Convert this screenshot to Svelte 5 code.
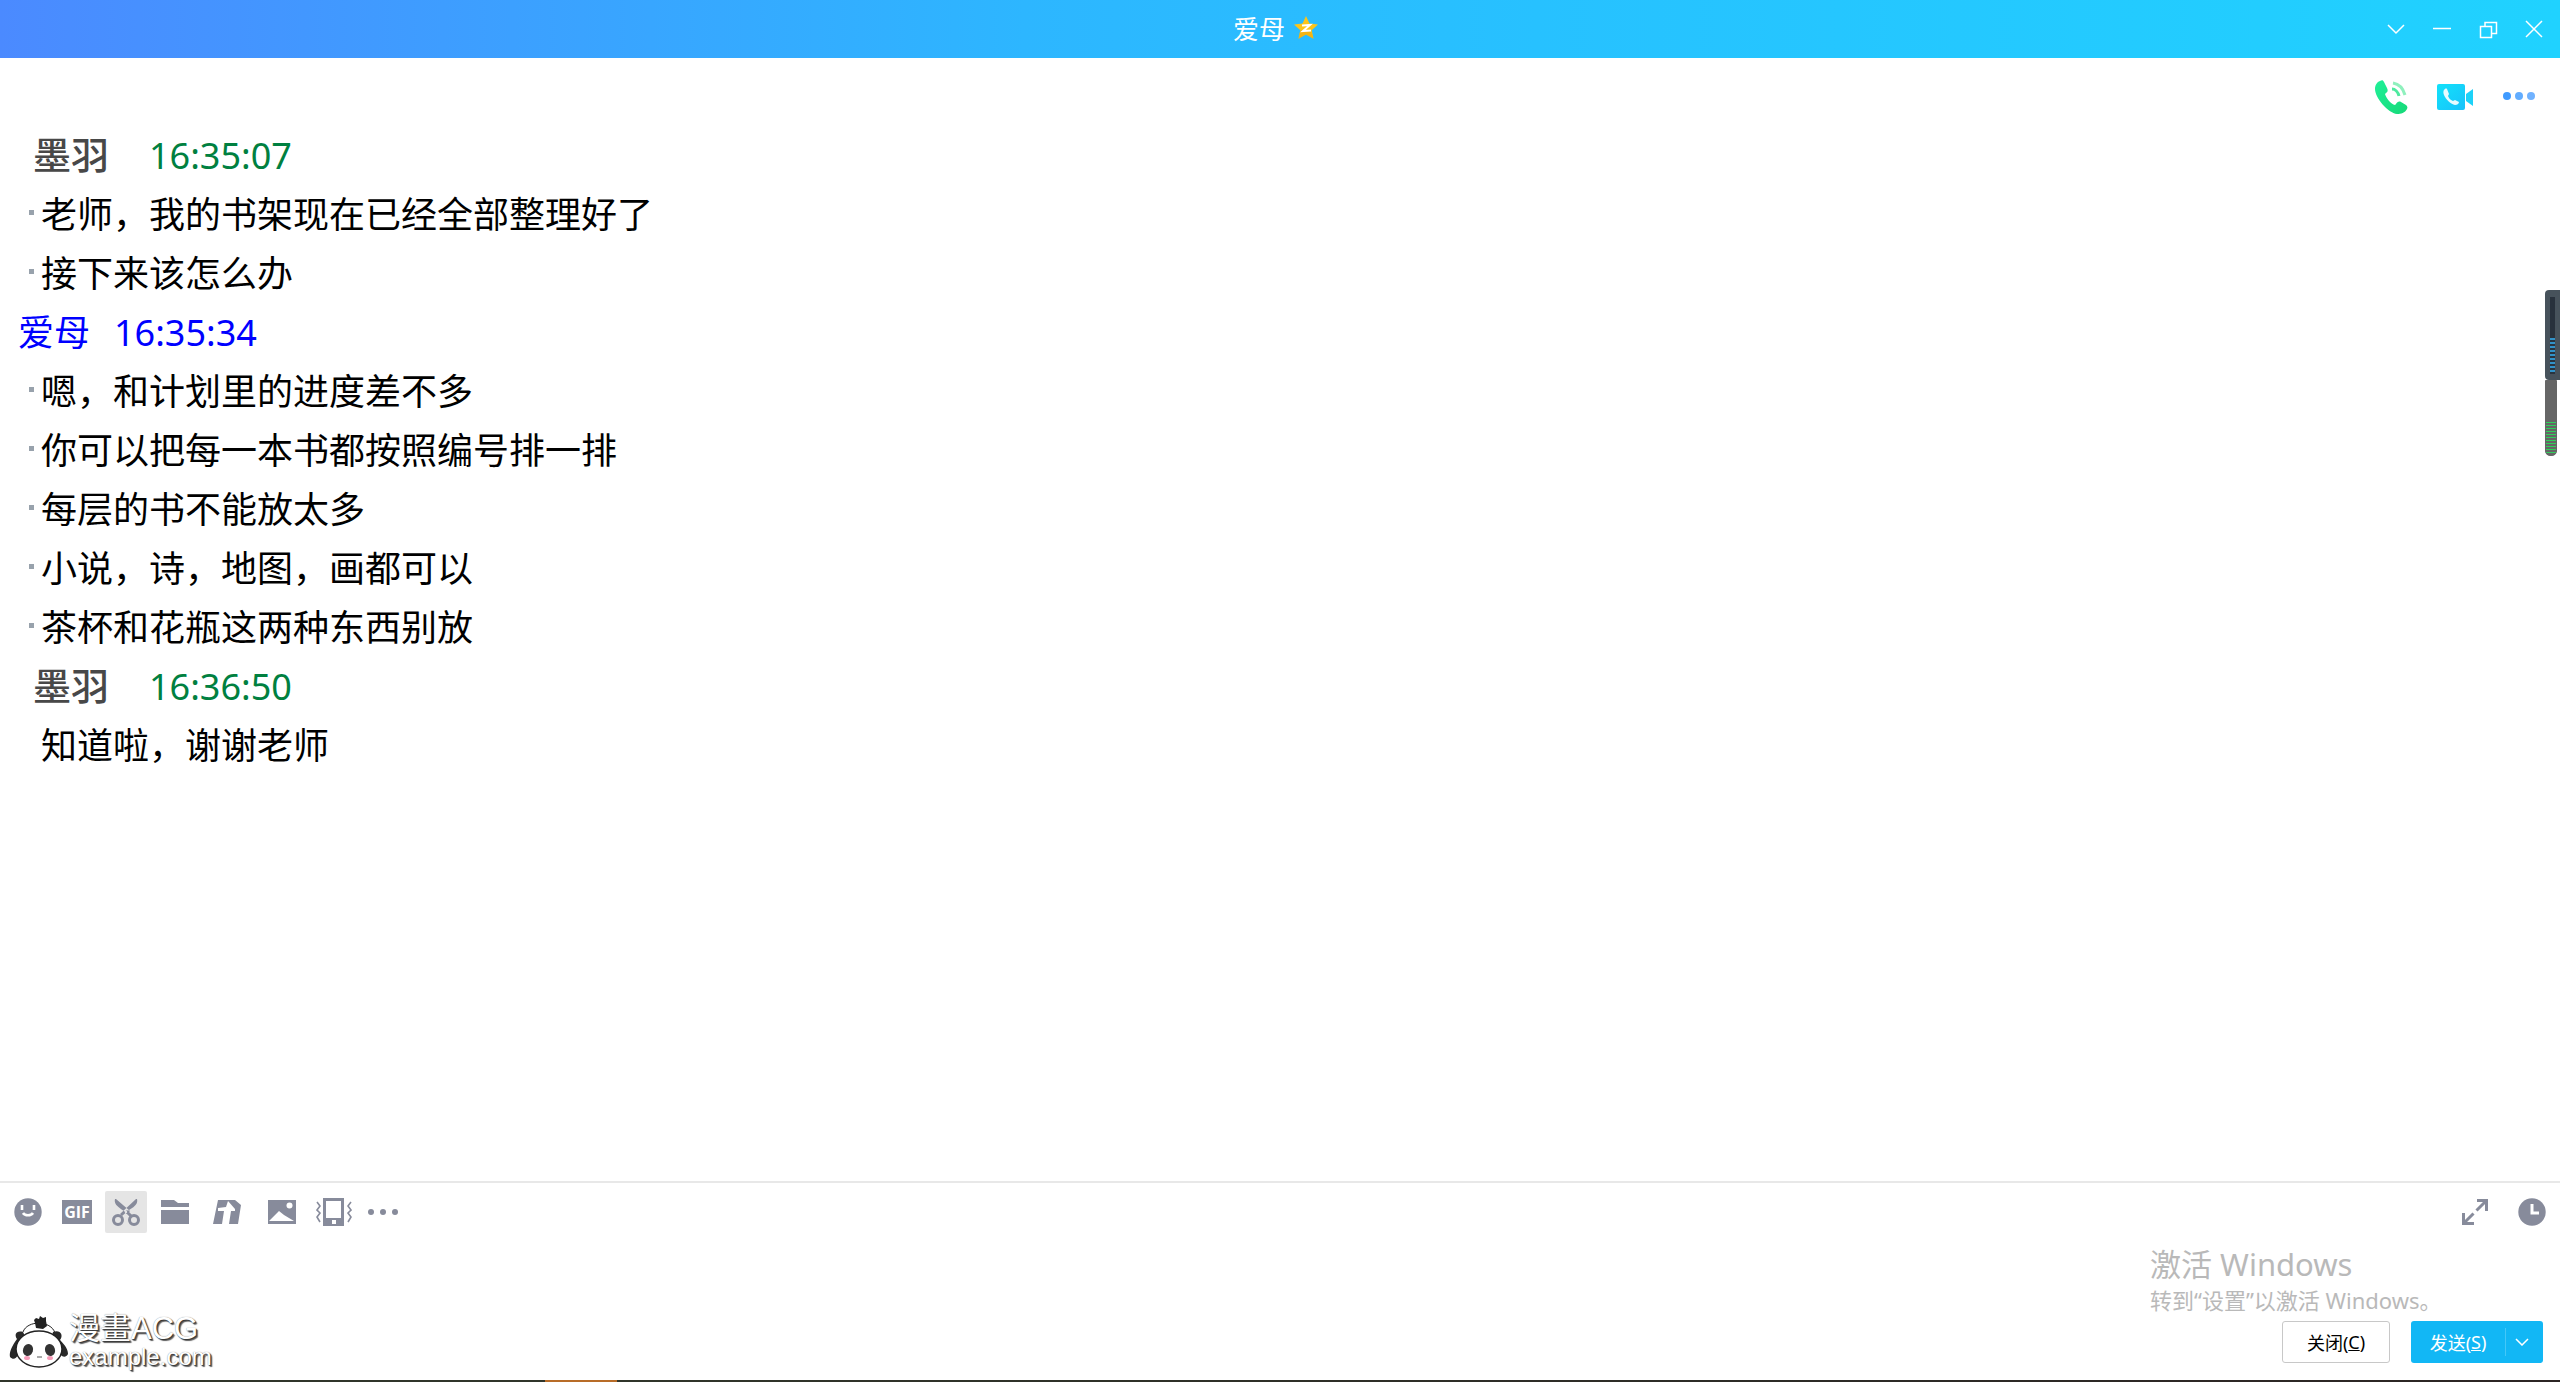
<script>
  const contact = "爱母";

  const thread = [
    {
      from: "me",
      name: "墨羽",
      time: "16:35:07",
      lines: ["老师，我的书架现在已经全部整理好了", "接下来该怎么办"],
      marked: true,
    },
    {
      from: "peer",
      name: contact,
      time: "16:35:34",
      lines: [
        "嗯，和计划里的进度差不多",
        "你可以把每一本书都按照编号排一排",
        "每层的书不能放太多",
        "小说，诗，地图，画都可以",
        "茶杯和花瓶这两种东西别放",
      ],
      marked: true,
    },
    { from: "me", name: "墨羽", time: "16:36:50", lines: ["知道啦，谢谢老师"], marked: false },
  ];

  let draft = $state("");
</script>

<div class="window">
  <header class="titlebar">
    <h1>{contact}</h1>
    <svg class="star" width="26" height="26" viewBox="0 0 26 26" aria-hidden="true">
      <path d="M13 1l3.5 7.6 8.5.9-6.300 5.700 1.800 8.600L13 19.600l-7.500 4.200 1.800-8.600L1 9.500l8.500-.9z" fill="#fcc41a" />
      <path d="M5.500 23.800l1.800-8.600L18 16l2.500 7.800L13 19.600z" fill="#efa90d" opacity=".6" />
      <path d="M9 10.500l8-.5-7 6 8-.5" fill="none" stroke="#fff" stroke-width="2" />
    </svg>
    <div class="controls">
      <button aria-label="收起"><svg width="20" height="20" viewBox="0 0 20 20"><path d="M2 6l8 8 8-8" /></svg></button>
      <button aria-label="最小化"><svg width="20" height="20" viewBox="0 0 20 20"><path d="M1 9.500h18" /></svg></button>
      <button aria-label="还原"><svg width="20" height="20" viewBox="0 0 20 20"><path d="M2.500 7.500h11v11h-11zM7 7V3.500h11.500v11H14" /></svg></button>
      <button aria-label="关闭窗口"><svg width="20" height="20" viewBox="0 0 20 20"><path d="M2 2l16 16M18 2L2 18" /></svg></button>
    </div>
  </header>

  <nav class="calls">
    <button aria-label="语音通话">
      <svg width="34" height="36" viewBox="0 0 34 36">
        <defs>
          <linearGradient id="green" x1="0" y1="0" x2="1" y2="1">
            <stop offset="0" stop-color="#20f098" /><stop offset="1" stop-color="#16d978" />
          </linearGradient>
        </defs>
        <path d="M6 2C3 3 1 6 1 10c0 9 13 24 22 25 4 0 8-1 10-5 1-2 0-3-1-4l-5-3c-2-1-4 0-5 2l-1 1c-4-1-9-7-10-11l1-1c2-1 2-3 1-5L10 3C9 1 8 1 6 2z" fill="url(#green)" />
        <path d="M18 10c3 0 6 3 7 7" stroke="#4eea9f" stroke-width="3" fill="none" />
        <path d="M19 4c6 1 10 5 12 12" stroke="#8ff0bd" stroke-width="3" fill="none" />
      </svg>
    </button>
    <button aria-label="视频通话">
      <svg width="36" height="28" viewBox="0 0 36 28">
        <defs>
          <linearGradient id="cyan" x1="0" y1="0" x2="1" y2="1">
            <stop offset="0" stop-color="#12e2fa" /><stop offset="1" stop-color="#18c2fb" />
          </linearGradient>
        </defs>
        <rect x="0" y="1" width="28" height="26" rx="2" fill="url(#cyan)" />
        <path d="M29 11l7-5v17l-7-5z" fill="#1cd2f8" />
        <path d="M8 6c-2 1-2 4-1 6 2 5 7 9 11 10 2 0 4-1 4-3l-4-2-2 1c-3-1-4-3-5-5l1-2-2-5c-1-1-1-1-2 0z" fill="#e8fbff" />
      </svg>
    </button>
    <button aria-label="更多">
      <svg width="34" height="12" viewBox="0 0 34 12">
        <circle cx="5" cy="5" r="4" fill="#409bff" />
        <circle cx="17" cy="5" r="4" fill="#62adff" />
        <circle cx="29" cy="5" r="4" fill="#70b2ff" />
      </svg>
    </button>
  </nav>

  <main class="messages">
    {#each thread as group}
      <section class={group.from}>
        <div class="sender">
          <span class="name">{group.name}</span>
          <time>{group.time}</time>
        </div>
        {#each group.lines as line}
          <p class:marked={group.marked}>{line}</p>
        {/each}
      </section>
    {/each}
  </main>

  <footer class="composer">
    <div class="toolbar">
      <button aria-label="表情">
        <svg width="28" height="28" viewBox="0 0 28 28">
          <circle cx="14" cy="14" r="13.700" />
          <path d="M8 7v5M20 7v5M9 15c2 3 8 3 10 0" fill="none" stroke="#fff" stroke-width="2.600" />
        </svg>
      </button>
      <button aria-label="动图"><span class="gif">GIF</span></button>
      <button class="active" aria-label="截图">
        <svg width="28" height="28" viewBox="0 0 28 28">
          <path d="M3 1c-1 4 1 7 9 12l3 3 3-3L4 1zM25 1c1 4-1 7-8 11l-7 6-2-2L24 1z" />
          <circle cx="6" cy="22" r="4.500" fill="none" stroke="#878b9b" stroke-width="3" />
          <circle cx="22" cy="22" r="4.500" fill="none" stroke="#878b9b" stroke-width="3" />
          <path d="M14 13l6 6" stroke="#878b9b" stroke-width="3" />
          <circle cx="14" cy="14" r="1.200" fill="#e5e5e5" />
        </svg>
      </button>
      <button aria-label="文件">
        <svg width="28" height="26" viewBox="0 0 28 26"><path d="M0 1h13l4 3h11v4H0zM0 11h28v14H0z" /></svg>
      </button>
      <button class="wide" aria-label="腾讯文档">
        <svg width="28" height="26" viewBox="0 0 28 26">
          <path d="M5 1h17l6 5-3 19h-9l2-13h4v-2l-7-8-2 6-8 1v3h6l-2 13H0z" />
        </svg>
      </button>
      <button class="wide" aria-label="图片">
        <svg width="28" height="26" viewBox="0 0 28 26">
          <rect y="1" width="28" height="24" />
          <path d="M1 22L11 12l5 4 10 6z" fill="#fff" />
          <circle cx="21.500" cy="6.500" r="3" fill="#fff" />
        </svg>
      </button>
      <button aria-label="窗口抖动">
        <svg width="36" height="28" viewBox="0 0 36 28">
          <path d="M7 0h21v28H7zM10 3v17h15V3zM16 22v4h4v-4z" fill-rule="evenodd" />
          <path d="M1 4l3 4-3 4 3 3-3 4 3 5M35 4l-3 4 3 4-3 3 3 4-3 5" fill="none" stroke="#878b9b" stroke-width="1.600" />
        </svg>
      </button>
      <button aria-label="更多工具">
        <svg width="32" height="8" viewBox="0 0 32 8"><circle cx="4" cy="4" r="3" /><circle cx="16" cy="4" r="3" /><circle cx="28" cy="4" r="3" /></svg>
      </button>
      <span class="spacer"></span>
      <button aria-label="展开">
        <svg width="26" height="26" viewBox="0 0 26 26">
          <path d="M15 1.500h9.500V12M24 2l-9.500 9.500M1.500 14v10.500H12M2 24l9.500-9.500" fill="none" stroke="#878b9b" stroke-width="3" />
        </svg>
      </button>
      <button class="history" aria-label="消息记录">
        <svg width="28" height="28" viewBox="0 0 28 28">
          <circle cx="14" cy="14" r="13.700" />
          <path d="M14 6v9h7" fill="none" stroke="#fff" stroke-width="3" />
        </svg>
      </button>
    </div>
    <textarea aria-label="输入消息" bind:value={draft}></textarea>
    <div class="actions">
      <button class="close">关闭(<u>C</u>)</button>
      <div class="send">
        <button>发送(<u>S</u>)</button>
        <button class="arrow" aria-label="发送选项"><svg width="14" height="8" viewBox="0 0 14 8"><path d="M1 1l6 6 6-6" /></svg></button>
      </div>
    </div>
  </footer>

  <div class="meter" aria-hidden="true">
    <div class="meter-top"><span></span></div>
    <div class="meter-bottom"></div>
  </div>

  <div class="activation">
    <strong>激活 Windows</strong>
    <span>转到“设置”以激活 Windows。</span>
  </div>

  <div class="brand">
    <svg width="60" height="54" viewBox="0 0 60 54" aria-hidden="true">
      <path d="M14 17C18 5 42 5 46 18" fill="#fff" stroke="#222" />
      <path d="M27 3l3 1 1-3 3 2 3-1v4l1 5-4 3-7-1-1-5-1-3z" fill="#222" />
      <path d="M14 17c-7-2-9 3-6 7-5 7-8 13-7 18 3 3 6 2 8-2l9-15zM44 17c7-3 11 3 7 8 6 6 8 10 8 14-2 4-6 3-8 0l-9-15z" fill="#292929" />
      <ellipse cx="30" cy="34" rx="23" ry="18" fill="#fff" stroke="#222" stroke-width="1.500" />
      <ellipse cx="19" cy="35" rx="5" ry="6" fill="#333" transform="rotate(18 19 35)" />
      <ellipse cx="41" cy="35" rx="5" ry="6" fill="#333" transform="rotate(-18 41 35)" />
      <ellipse cx="18" cy="43" rx="3" ry="2" fill="#f79cb9" />
      <ellipse cx="41" cy="43" rx="3" ry="2" fill="#f79cb9" />
      <path d="M28 42h5" stroke="#555" />
    </svg>
    <div class="brand-text">
      <span>漫畫ACG</span>
      <small>example.com</small>
    </div>
  </div>
</div>

<style>
  :global(body) {
    margin: 0;
  }

  .window {
    position: relative;
    display: flex;
    flex-direction: column;
    box-sizing: border-box;
    min-height: 100vh;
    padding-bottom: 2px;
    background:
      linear-gradient(90deg, #30352a 21.3%, #b86c28 21.3%, #b86c28 24.1%, #30352a 24.1%, #2c2524 100%) bottom / 100% 2px no-repeat,
      #fff;
    font-family: "Noto Sans", "Noto Sans CJK SC", sans-serif;
  }

  button {
    display: flex;
    align-items: center;
    justify-content: center;
    padding: 0;
    border: 0;
    background: none;
    font: inherit;
    cursor: pointer;
  }

  .titlebar {
    display: grid;
    grid-template-columns: 1fr auto auto 1fr;
    align-items: center;
    height: 58px;
    padding-right: 8px;
    background: linear-gradient(90deg, #4b8aff, #2db6ff 40%, #27c1ff 60%, #20d2ff);
  }

  h1 {
    grid-column: 2;
    margin: 0;
    color: #fff;
    font-size: 26px;
    font-weight: 400;
    line-height: 58px;
  }

  .star {
    margin: 0 0 2px 8px;
  }

  .controls {
    display: flex;
    justify-content: flex-end;
    gap: 26px;
    padding-right: 8px;
  }

  .controls path,
  .arrow path {
    fill: none;
    stroke: #fff;
    stroke-width: 1.5;
  }

  .calls {
    display: flex;
    justify-content: flex-end;
    align-items: center;
    gap: 29px;
    height: 68px;
    padding-right: 24px;
    box-sizing: border-box;
    padding-top: 10px;
  }

  .messages {
    flex: 1;
    font-size: 36px;
    line-height: 59px;
  }

  .sender {
    display: flex;
    height: 59px;
    padding-left: 18px;
    gap: 24px;
    color: #00f;
  }

  .me .sender {
    padding-left: 33px;
    gap: 40px;
    color: #008040;
  }

  .me .name {
    color: #484848;
    font-size: 38px;
    font-weight: 500;
    line-height: 57px;
  }

  p {
    display: flex;
    align-items: center;
    height: 59px;
    margin: 0;
    padding-left: 41px;
    color: #000;
  }

  .marked {
    padding-left: 29px;
  }

  .marked::before {
    content: "";
    width: 5px;
    height: 5px;
    margin: 0 7px 4px 0;
    background: #98a2ac;
  }

  .composer {
    border-top: 2px solid #e8e8e8;
  }

  .toolbar {
    display: flex;
    gap: 7px;
    padding: 8px 7px 0;
    fill: #878b9b;
  }

  .toolbar button {
    width: 42px;
    height: 42px;
    border-radius: 2px;
  }

  .toolbar .wide {
    width: 48px;
  }

  .toolbar .active {
    background: #e5e5e5;
  }

  .toolbar .history {
    margin-left: 8px;
  }

  .gif {
    width: 30px;
    height: 24px;
    background: #878b9b;
    color: #fff;
    font: 700 16px/24px "Open Sans", sans-serif;
  }

  .spacer {
    flex: 1;
  }

  textarea {
    display: block;
    box-sizing: border-box;
    width: 100%;
    height: 88px;
    padding: 8px 18px;
    border: 0;
    outline: 0;
    resize: none;
    background: none;
    font: 36px "Noto Sans CJK SC", sans-serif;
  }

  .actions {
    display: flex;
    justify-content: flex-end;
    gap: 21px;
    padding: 0 17px 17px;
    font-size: 18px;
  }

  .close {
    box-sizing: border-box;
    width: 108px;
    height: 42px;
    border: 1px solid #c8c8c8;
    border-radius: 3px;
    background: #fff;
    color: #000;
  }

  .send {
    display: flex;
    align-items: center;
    width: 132px;
    height: 42px;
    border-radius: 3px;
    background: #12b7f5;
  }

  .send button {
    flex: 1;
    color: #fff;
  }

  .send .arrow {
    flex: none;
    width: 38px;
    height: 28px;
    padding-right: 6px;
    border-left: 1px solid #45c7f7;
  }

  /* floating level meter docked to the right edge */
  .meter {
    position: absolute;
    top: 290px;
    right: 0;
    width: 15px;
  }

  .meter-top {
    display: flex;
    justify-content: center;
    box-sizing: border-box;
    height: 90px;
    padding-top: 7px;
    border-radius: 4px 0 0 4px;
    background: #47525b;
  }

  .meter-top span {
    width: 5px;
    height: 77px;
    background:
      repeating-linear-gradient(#3292c8 0 2px, #29343f 2px 4px) bottom / 100% 36px no-repeat,
      #28313c;
  }

  .meter-bottom {
    box-sizing: border-box;
    width: 12px;
    height: 76px;
    border: 1px solid #666;
    border-radius: 0 0 5px 5px;
    background:
      repeating-linear-gradient(#2fd05a 0 1px, #666 1px 3px) bottom / 100% 33px no-repeat,
      #666;
  }

  .activation {
    position: absolute;
    right: 110px;
    bottom: 66px;
    display: flex;
    flex-direction: column;
    width: 300px;
    color: #b9b9b9;
    white-space: nowrap;
    pointer-events: none;
  }

  .activation strong {
    font-size: 31px;
    font-weight: 400;
    line-height: 40px;
  }

  .activation span {
    font-size: 22px;
    line-height: 32px;
  }

  .brand {
    position: absolute;
    left: 9px;
    bottom: 12px;
    display: flex;
    align-items: center;
    pointer-events: none;
  }

  .brand-text {
    display: flex;
    flex-direction: column;
    color: #fff;
    font-family: "Liberation Sans", "Noto Sans CJK TC", sans-serif;
    text-shadow: 1px 1px 1px #333, 2px 2px 1px #666, 0 0 1px #888;
  }

  .brand-text span {
    font-size: 31px;
    line-height: 30px;
  }

  .brand-text small {
    font-size: 24px;
    line-height: 26px;
  }
</style>
